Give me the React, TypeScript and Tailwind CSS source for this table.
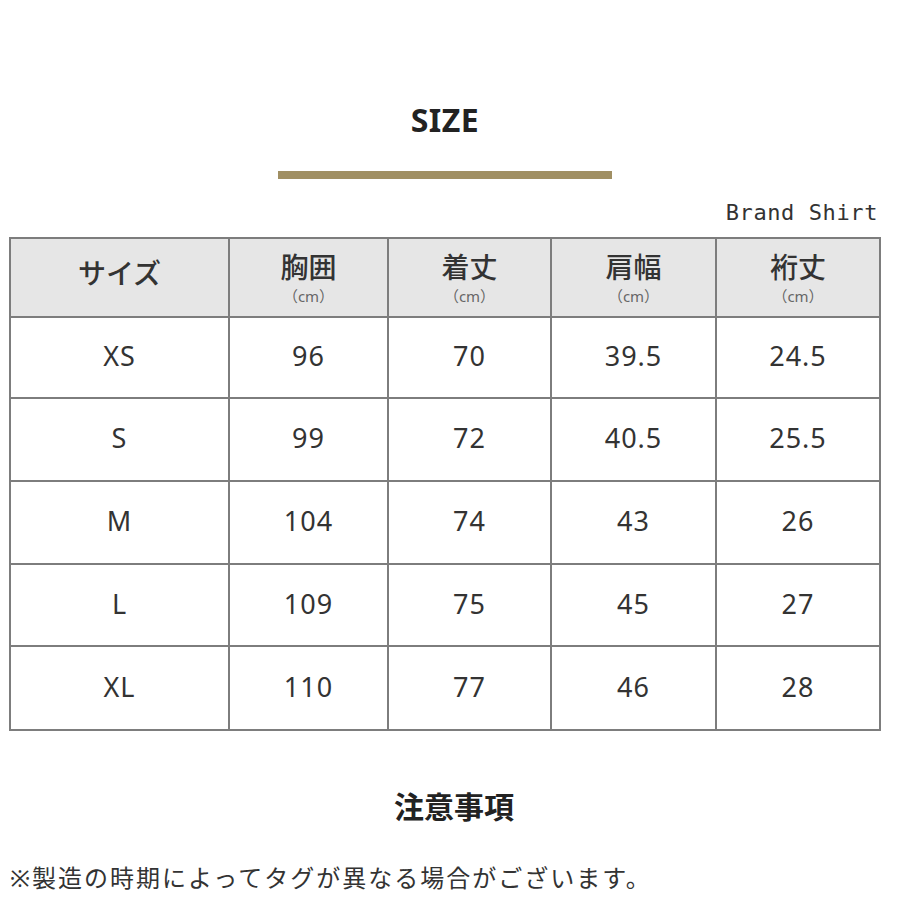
import React from "react";

const rows = [
  { size: "XS", chest: "96", length: "70", shoulder: "39.5", sleeve: "24.5", h: "h-[81px]" },
  { size: "S", chest: "99", length: "72", shoulder: "40.5", sleeve: "25.5", h: "h-[83px]" },
  { size: "M", chest: "104", length: "74", shoulder: "43", sleeve: "26", h: "h-[83px]" },
  { size: "L", chest: "109", length: "75", shoulder: "45", sleeve: "27", h: "h-[82px]" },
  { size: "XL", chest: "110", length: "77", shoulder: "46", sleeve: "28", h: "h-[84px]" },
];

const headers = ["胸囲", "着丈", "肩幅", "裄丈"];

const font = "font-['Noto_Sans','Noto_Sans_CJK_JP',sans-serif]";

const App: React.FC = () => {
  return (
    <div className={`w-[900px] min-h-[900px] bg-white text-[#333] ${font}`}>
      <div className="w-[870px] ml-[10px] pt-[100px] flex flex-col items-center">
        {/* title */}
        <h1 className="text-[32px] leading-[40px] font-bold text-[#222] tracking-[0.5px]">SIZE</h1>
        <div className="mt-[31px] w-[334px] h-[8px] bg-[#a08f63]" />
        <div className="self-end mr-[2px] mt-[20px] mb-[10px] font-['DejaVu_Sans_Mono',monospace] text-[22px] leading-[28px] tracking-[0.6px] text-[#333]">
          Brand Shirt
        </div>

        {/* table */}
        <table className="w-[870px] border-collapse border-2 border-[#7d7d7d] table-fixed">
          <colgroup>
            <col className="w-[219px]" />
            <col className="w-[159px]" />
            <col className="w-[163px]" />
            <col className="w-[165px]" />
            <col className="w-[164px]" />
          </colgroup>
          <thead>
            <tr className="h-[79px] bg-[#e6e6e6]">
              <th className="border-2 border-[#7d7d7d] align-top pt-[18px] text-[28px] leading-[32px] font-medium">
                サイズ
              </th>
              {headers.map((h) => (
                <th key={h} className="border-2 border-[#7d7d7d] align-top font-medium">
                  <div className="flex flex-col items-center pt-[12px]">
                    <span className="text-[28px] leading-[32px]">{h}</span>
                    <span className="mt-[4px] text-[15px] leading-[18px] font-normal text-[#666]">（cm）</span>
                  </div>
                </th>
              ))}
            </tr>
          </thead>
          <tbody>
            {rows.map((r) => (
              <tr key={r.size} className={r.h}>
                {[r.size, r.chest, r.length, r.shoulder, r.sleeve].map((v, i) => (
                  <td
                    key={i}
                    className="border-2 border-[#7d7d7d] pb-[4px] text-center text-[27px] leading-none tracking-[1px]"
                  >
                    {v}
                  </td>
                ))}
              </tr>
            ))}
          </tbody>
        </table>

        {/* notes */}
        <h2 className="mt-[58px] text-[30px] leading-[36px] font-bold text-[#222] pl-[18px]">注意事項</h2>
        <p className="self-start mt-[37px] text-[24px] leading-[32px] tracking-[2px] text-[#333]">
          ※製造の時期によってタグが異なる場合がございます。
        </p>
      </div>
    </div>
  );
};

export default App;
